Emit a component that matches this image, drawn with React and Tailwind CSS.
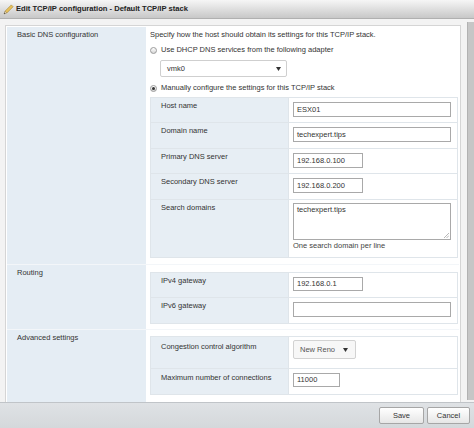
import React from "react";

function Radio({ checked }) {
  return (
    <span className="w-[7px] h-[7px] rounded-full border border-[#9a9a9a] bg-gradient-to-b from-[#ffffff] to-[#d6d6d6] flex items-center justify-center shrink-0">
      {checked && <span className="w-[3px] h-[3px] rounded-full bg-[#333]" />}
    </span>
  );
}

function Arrow() {
  return (
    <svg width="5" height="4" viewBox="0 0 5 4" className="shrink-0">
      <path d="M0 0 L5 0 L2.5 4 Z" fill="#333" />
    </svg>
  );
}

function Input({ value, w, h = 15 }) {
  return (
    <div
      className={`${w} border border-[#a9a9a9] bg-white pl-[3px] flex items-center text-[#333]`}
      style={{ height: h }}
    >
      {value}
    </div>
  );
}

function Row({ label, h, lpt = 3, vpt = 4, last, children }) {
  return (
    <div
      className={`flex ${last ? "" : "border-b border-[#dfe5ea]"}`}
      style={{ height: h }}
    >
      <div className="w-[138px] bg-[#e7eef4] pl-[10px] border-r border-[#dfe5ea]" style={{ paddingTop: lpt }}>
        {label}
      </div>
      <div className="flex-1 bg-white pl-[4px]" style={{ paddingTop: vpt }}>
        {children}
      </div>
    </div>
  );
}

function Section({ label, h, top, children }) {
  return (
    <div className={`flex ${top ? "" : "border-t border-[#f3f6f9]"}`} style={{ height: h }}>
      <div className="w-[139px] bg-[#e5edf4] pl-[10px] pt-[3px]">{label}</div>
      <div className="w-[313px] bg-white pl-[4px] pr-[1px]">{children}</div>
    </div>
  );
}

export default function App() {
  return (
    <div className="w-[474px] h-[428px] overflow-hidden flex flex-col bg-[#f3f3f3] text-[#333] text-[7.5px] leading-[10px] font-['Liberation_Sans',Arial,sans-serif]">
      {/* Title bar */}
      <div className="h-[19px] shrink-0 flex items-center pl-[3px] gap-[2px] bg-gradient-to-b from-[#f6f6f6] to-[#c8c8c8] border-b border-[#b0b0b0]">
        <svg width="11" height="11" viewBox="0 0 11 11">
          <path d="M2 7.2 L8.3 0.9 L10.1 2.7 L3.8 9 Z" fill="#e8c15a" stroke="#a8862c" strokeWidth="0.6" />
          <path d="M2 7.2 L3.8 9 L1 10 Z" fill="#f3dfb2" stroke="#8a7a55" strokeWidth="0.5" />
          <path d="M1 10 L1.5 8.6 L2.4 9.5 Z" fill="#333" />
        </svg>
        <span className="font-bold text-[7.6px] text-[#222]">Edit TCP/IP configuration - Default TCP/IP stack</span>
      </div>

      {/* Middle */}
      <div className="h-[383px] shrink-0 flex">
        <div className="pl-[5px] pt-[6px]">
          <div className="w-[456px] h-[377px] border border-b-0 border-[#d5d5d5] bg-white p-[1px] pb-0 flex flex-col">
            {/* Basic DNS */}
            <Section label="Basic DNS configuration" h={237} top>
              <div className="pt-[3px]">
                <div className="h-[10px]">Specify how the host should obtain its settings for this TCP/IP stack.</div>
                <div className="h-[10px] mt-[5px] flex items-center gap-[4px]">
                  <Radio />
                  <span>Use DHCP DNS services from the following adapter</span>
                </div>
                <div className="mt-[5px] ml-[10px] w-[127px] h-[17px] border border-[#cfcfcf] rounded-[2px] bg-white flex items-center justify-between pl-[6px] pr-[5px]">
                  <span>vmk0</span>
                  <Arrow />
                </div>
                <div className="h-[10px] mt-[6px] flex items-center gap-[4px]">
                  <Radio checked />
                  <span>Manually configure the settings for this TCP/IP stack</span>
                </div>
                <div className="mt-[4px] w-[308px] border border-[#dfe5ea]">
                  <Row label="Host name" h={25}>
                    <Input value="ESX01" w="w-[158px]" />
                  </Row>
                  <Row label="Domain name" h={26}>
                    <Input value="techexpert.tips" w="w-[158px]" />
                  </Row>
                  <Row label="Primary DNS server" h={25}>
                    <Input value="192.168.0.100" w="w-[70px]" />
                  </Row>
                  <Row label="Secondary DNS server" h={26}>
                    <Input value="192.168.0.200" w="w-[70px]" />
                  </Row>
                  <Row label="Search domains" h={57} last vpt={3}>
                    <div className="relative w-[158px] h-[37px] border border-[#a9a9a9] bg-white pl-[3px] pt-[1px]">
                      techexpert.tips
                      <svg width="5" height="5" viewBox="0 0 5 5" className="absolute right-[1px] bottom-[1px]">
                        <path d="M5 0 L0 5 M5 2.5 L2.5 5" stroke="#999" strokeWidth="0.7" />
                      </svg>
                    </div>
                    <div className="mt-[1px] text-[#444]">One search domain per line</div>
                  </Row>
                </div>
              </div>
            </Section>

            {/* Routing */}
            <Section label="Routing" h={65}>
              <div className="pt-[7px]">
                <div className="w-[308px] border border-[#dfe5ea]">
                  <Row label="IPv4 gateway" h={25}>
                    <Input value="192.168.0.1" w="w-[70px]" h={14} />
                  </Row>
                  <Row label="IPv6 gateway" h={25} last>
                    <Input value="" w="w-[158px]" h={15} />
                  </Row>
                </div>
              </div>
            </Section>

            {/* Advanced */}
            <Section label="Advanced settings" h={73}>
              <div className="pt-[6px]">
                <div className="w-[308px] border border-[#dfe5ea]">
                  <Row label="Congestion control algorithm" h={32} lpt={5} vpt={3}>
                    <div className="w-[63px] h-[19px] border border-[#d2d2d2] rounded-[2px] bg-[#f7f7f7] flex items-center justify-between pl-[6px] pr-[7px] text-[#555]">
                      <span>New Reno</span>
                      <Arrow />
                    </div>
                  </Row>
                  <Row label="Maximum number of connections" h={25} lpt={4} vpt={4} last>
                    <Input value="11000" w="w-[47px]" h={14} />
                  </Row>
                </div>
              </div>
            </Section>
          </div>
        </div>
        {/* Scrollbar */}
        <div className="ml-[6px] mt-[3px] w-[7px] h-[378px] bg-[#c6c6c6] border-l border-[#b2b2b2]" />
      </div>

      {/* Footer */}
      <div className="h-[26px] shrink-0 bg-gradient-to-b from-[#dfe2e5] to-[#d4d8db] border-t border-[#c0c4c8] flex justify-end items-start pt-[4px] pr-[4px] gap-[3px]">
        <div className="w-[45px] h-[17px] border border-[#a6a6a6] rounded-[2px] bg-gradient-to-b from-[#ffffff] to-[#e6e6e6] flex items-center justify-center text-[#333]">
          Save
        </div>
        <div className="w-[43px] h-[17px] border border-[#a6a6a6] rounded-[2px] bg-gradient-to-b from-[#ffffff] to-[#e6e6e6] flex items-center justify-center text-[#333]">
          Cancel
        </div>
      </div>
    </div>
  );
}
